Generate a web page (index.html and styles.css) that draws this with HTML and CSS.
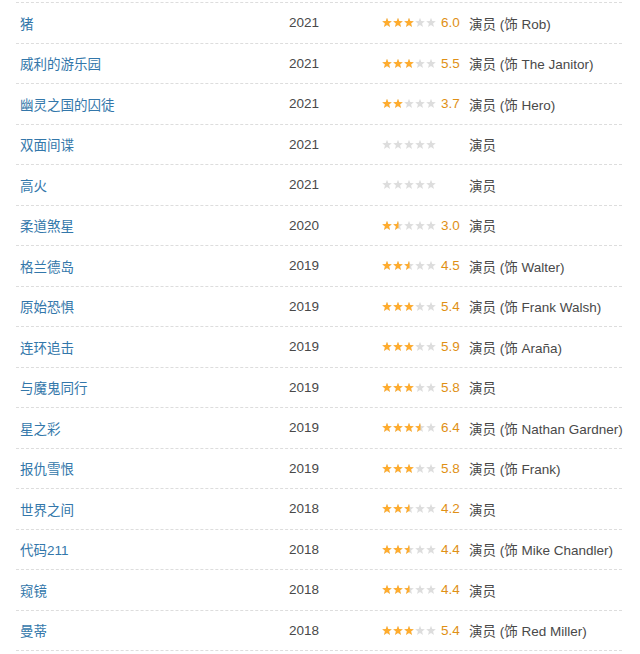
FILE: index.html
```html
<!DOCTYPE html>
<html lang="zh-CN">
<head>
    <meta charset="UTF-8">
    <meta name="viewport" content="width=device-width, initial-scale=1.0">
    <title>作品</title>
    <link rel="stylesheet" href="styles.css">
</head>
<body>
    <svg class="defs" width="0" height="0">
        <symbol id="star" viewBox="0 0 10 10">
            <polygon points="5,0.2 6.25,3.55 9.8,3.7 7.05,5.95 8.05,9.6 5,7.55 1.95,9.6 2.95,5.95 0.2,3.7 3.75,3.55"/>
        </symbol>
    </svg>
    <ul class="works"></ul>
    <script>
    const works = [
        ['猪', 2021, '6.0', 3, '演员 (饰 Rob)'],
        ['威利的游乐园', 2021, '5.5', 3, '演员 (饰 The Janitor)'],
        ['幽灵之国的囚徒', 2021, '3.7', 2, '演员 (饰 Hero)'],
        ['双面间谍', 2021, '', 0, '演员'],
        ['高火', 2021, '', 0, '演员'],
        ['柔道煞星', 2020, '3.0', 1.5, '演员'],
        ['格兰德岛', 2019, '4.5', 2.5, '演员 (饰 Walter)'],
        ['原始恐惧', 2019, '5.4', 3, '演员 (饰 Frank Walsh)'],
        ['连环追击', 2019, '5.9', 3, '演员 (饰 Araña)'],
        ['与魔鬼同行', 2019, '5.8', 3, '演员'],
        ['星之彩', 2019, '6.4', 3.5, '演员 (饰 Nathan Gardner)'],
        ['报仇雪恨', 2019, '5.8', 3, '演员 (饰 Frank)'],
        ['世界之间', 2018, '4.2', 2.5, '演员'],
        ['代码211', 2018, '4.4', 2.5, '演员 (饰 Mike Chandler)'],
        ['窥镜', 2018, '4.4', 2.5, '演员'],
        ['曼蒂', 2018, '5.4', 3, '演员 (饰 Red Miller)']
    ];
    const list = document.querySelector('.works');
    // five stars, gold part clipped to the rating
    function stars(n) {
        let uses = '';
        for (let i = 0; i < 5; i++) {
            uses += `<use href="#star" x="${i * 11}" y="0.5" width="10" height="10"/>`;
        }
        return `<svg width="55" height="11" viewBox="0 0 55 11">
            <g class="off">${uses}</g>
            <svg width="${n * 11}" height="11"><g class="on">${uses}</g></svg>
        </svg>`;
    }
    works.forEach(([title, year, rate, n, role]) => {
        const li = document.createElement('li');
        li.innerHTML = `
            <a class="title" href="#">${title}</a>
            <span class="year">${year}</span>
            <span class="stars">${stars(n)}</span>
            <span class="rate">${rate}</span>
            <span class="role">${role}</span>`;
        list.appendChild(li);
    });
    </script>
</body>
</html>
```

FILE: styles.css
```css
*{
    margin: 0;
    padding: 0;
    box-sizing: border-box;
}
body{
    background: #fff;
    font-family: 'Liberation Sans', 'Noto Sans CJK SC', sans-serif;
    font-size: 13.5px;
    color: #494949;
    padding: 2px 18px 0 16px;
}
.defs{
    position: absolute;
}
.works{
    list-style: none;
    border-top: 1px dashed #ddd;
}
.works li{
    display: grid;
    grid-template-columns: 269px 93px 59px 28px 1fr;
    align-items: center;
    height: 40.5px;
    padding-left: 4px;
    border-bottom: 1px dashed #ddd;
    white-space: nowrap;
}
.title{
    color: #37a;
    text-decoration: none;
}
.stars{
    display: flex;
    align-items: center;
}
.stars .off{
    fill: #ddd;
}
.stars .on{
    fill: #ffac2d;
}
.rate{
    color: #e09015;
}
.role{
    color: #494949;
}
```
